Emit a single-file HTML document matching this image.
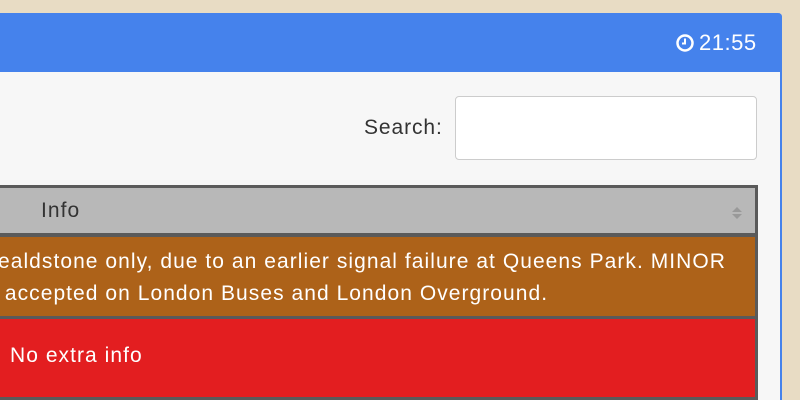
<!DOCTYPE html>
<html><head><style>
html,body{margin:0;width:800px;height:400px;overflow:hidden}
body{background:#e8dcc4;position:relative;font-family:"Liberation Sans",sans-serif;letter-spacing:1.05px}
.p{position:absolute;left:-10px;top:13px;width:792px;height:400px;background:#f7f7f7;border-right:2px solid #4582ec;box-sizing:border-box;border-top-right-radius:4px}
.h{position:absolute;left:-10px;top:13px;width:792px;height:59px;background:#4582ec;border-top-right-radius:4px}
.t{position:absolute;color:#fff;font-size:22px;top:30px;left:699px;letter-spacing:0.5px}
.s{position:absolute;left:364px;top:116px;font-size:21px;color:#333;letter-spacing:0.9px}
.i{position:absolute;left:455px;top:96px;width:302px;height:64px;box-sizing:border-box;background:#fff;border:1px solid #ccc;border-radius:4px}
.tb{position:absolute;left:-10px;top:185px;width:768px;height:220px;background:#5a5a5a}
.r{position:absolute;left:0;width:755px;overflow:hidden;white-space:nowrap;font-size:21px}
</style></head><body>
<div class="p"></div><div class="h"></div>
<svg style="position:absolute;left:675px;top:33px" width="20" height="20" viewBox="0 0 20 20"><circle cx="10" cy="10" r="7.5" fill="none" stroke="#fff" stroke-width="2.5"/><path d="M10 5.5V10.5H7" fill="none" stroke="#fff" stroke-width="2"/></svg>
<div class="t">21:55</div>
<div class="s">Search:</div><div class="i"></div>
<div class="tb"></div>
<div class="r" style="top:188px;height:45px;background:#b8b8b8;color:#333"><span style="position:absolute;left:41px;top:11px">Info</span>
<svg style="position:absolute;left:731px;top:18px" width="12" height="14"><path d="M1 6L6 1L11 6Z M1 8L6 13L11 8Z" fill="#999"/></svg></div>
<div class="r" style="top:237px;height:79px;background:#ad6219;color:#fff;line-height:32px"><div style="position:absolute;left:-2px;top:9px">ealdstone only, due to an earlier signal failure at Queens Park. MINOR<br>&nbsp;accepted on London Buses and London Overground.</div></div>
<div class="r" style="top:319px;height:78px;background:#e31e20;color:#fff"><span style="position:absolute;left:10px;top:25px">No extra info</span></div>
</body></html>
